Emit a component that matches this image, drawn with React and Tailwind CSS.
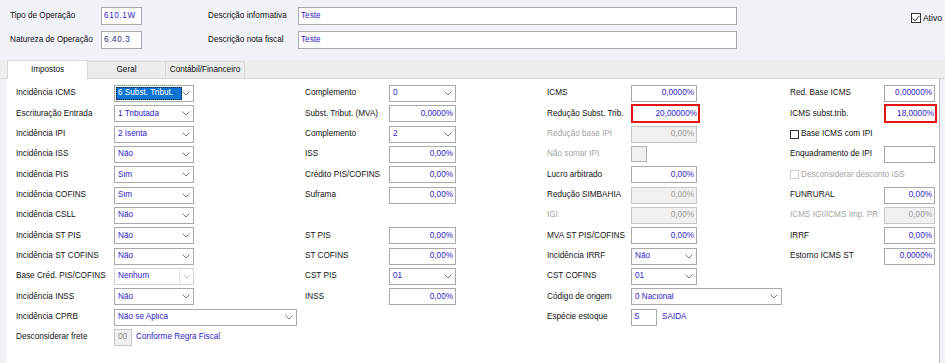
import React from "react";

const BLUE = "text-[#3022c6]";

function Chevron({ light }) {
  return (
    <svg width="8" height="5" viewBox="0 0 8 5" className="shrink-0">
      <path d="M0.5 0.5 L4 4 L7.5 0.5" fill="none" stroke={light ? "#c4c4c4" : "#7a7a7a"} strokeWidth="1" />
    </svg>
  );
}

function Select({ value, w = "w-[80px]", highlight }) {
  return (
    <div className={`${w} h-[17px] bg-white border border-[#a9a9a9] flex items-center pl-[1px] pr-[3px]`}>
      <div className="flex-1 min-w-0 flex items-center">
        {highlight ? (
          <span className="inline-flex items-center w-[66px] h-[13px] bg-[#0a74d4] text-white border border-dotted border-[#1a1a1a] pl-[1px] whitespace-nowrap overflow-hidden">
            {value}
          </span>
        ) : (
          <span className={`${BLUE} pl-[2px] whitespace-nowrap overflow-hidden`}>{value}</span>
        )}
      </div>
      <Chevron />
    </div>
  );
}

function Num({ value, w = "w-[67px]", disabled, red }) {
  if (red) {
    return (
      <div className={`${w} h-[19px] bg-white border-2 border-[#e21414] flex items-center justify-end pr-[1px] ${BLUE}`}>
        {value}
      </div>
    );
  }
  return (
    <div
      className={`${w} h-[17px] border flex items-center justify-end pr-[2px] ${
        disabled ? "bg-[#f0f0f0] border-[#c6c6c6] text-[#9a9a9a]" : `bg-white border-[#a9a9a9] ${BLUE}`
      }`}
    >
      {value}
    </div>
  );
}

function Row({ label, lw, disabled, children }) {
  return (
    <div className="flex items-center h-[20.33px]">
      <div className={`${lw} shrink-0 whitespace-nowrap ${disabled ? "text-[#a3a3a3]" : "text-[#111]"}`}>{label}</div>
      {children}
    </div>
  );
}

function Check({ label, disabled }) {
  return (
    <div className="flex items-center h-[20.33px]">
      <div className={`w-[9px] h-[9px] border ${disabled ? "border-[#cfcfcf]" : "border-[#333]"} bg-white mr-[2px]`} />
      <span className={disabled ? "text-[#a3a3a3]" : "text-[#111]"}>{label}</span>
    </div>
  );
}

export default function App() {
  const c1 = "w-[98px]";
  const c2 = "w-[84px]";
  const c3 = "w-[84px]";
  const c4 = "w-[94px]";
  return (
    <div className="w-[945px] h-[363px] bg-[#f1f2f8] font-['Liberation_Sans',Arial,sans-serif] text-[8.2px] leading-none overflow-hidden">
      {/* top */}
      <div className="h-[60px] flex pl-[10px] pt-[7px]">
        <div className="flex flex-col gap-[6px]">
          <div className="flex items-center h-[18px]">
            <div className="w-[91px] text-[#111]">Tipo de Operação</div>
            <div className={`w-[41px] h-[18px] bg-white border border-[#a9a9a9] flex items-center pl-[2px] tracking-[0.6px] ${BLUE}`}>610.1W</div>
            <div className="w-[66px]" />
            <div className="w-[90px] text-[#111]">Descrição informativa</div>
            <div className={`w-[439px] h-[18px] bg-white border border-[#a9a9a9] flex items-center pl-[2px] ${BLUE}`}>Teste</div>
          </div>
          <div className="flex items-center h-[18px]">
            <div className="w-[91px] text-[#111]">Natureza de Operação</div>
            <div className="w-[41px] h-[18px] bg-white border border-[#a9a9a9] flex items-center pl-[2px] tracking-[0.6px] text-[#1f2a7a]">6.40.3</div>
            <div className="w-[66px]" />
            <div className="w-[90px] text-[#111]">Descrição nota fiscal</div>
            <div className={`w-[439px] h-[18px] bg-white border border-[#a9a9a9] flex items-center pl-[2px] ${BLUE}`}>Teste</div>
          </div>
        </div>
        <div className="ml-auto mr-[3px] mt-[6px] flex items-start">
          <div className="w-[10px] h-[10px] border border-[#333] bg-white flex items-center justify-center">
            <svg width="8" height="7" viewBox="0 0 8 7">
              <path d="M0.8 3.6 L3 5.8 L7.4 0.8" fill="none" stroke="#222" strokeWidth="1" />
            </svg>
          </div>
          <span className="ml-[2px] mt-[1px] text-[#111] text-[8.6px]">Ativo</span>
        </div>
      </div>

      {/* tabs */}
      <div className="h-[19px] bg-[#eeeeee] flex items-end pl-[7px] border-b border-[#d9d9d9]">
        <div className="w-[81px] h-[19px] bg-white border-t border-l border-r border-[#d9d9d9] -mb-[1px] flex items-center justify-center text-[#111]">
          Impostos
        </div>
        <div className="w-[78px] h-[17px] bg-[#ececec] border-t border-r border-[#d9d9d9] flex items-center justify-center text-[#111]">
          Geral
        </div>
        <div className="w-[79px] h-[17px] bg-[#ececec] border-t border-r border-[#d9d9d9] flex items-center justify-center text-[#111]">
          Contábil/Financeiro
        </div>
      </div>

      {/* panel */}
      <div className="ml-[7px] w-[933px] h-[284px] bg-white border-r border-[#bdbdbd] flex pl-[9px] pt-[4.3px]">
        {/* col 1 */}
        <div className="w-[289px] flex flex-col">
          <Row label="Incidência ICMS" lw={c1}><Select value="6 Subst. Tribut." highlight /></Row>
          <Row label="Escrituração Entrada" lw={c1}><Select value="1 Tributada" /></Row>
          <Row label="Incidência IPI" lw={c1}><Select value="2 Isenta" /></Row>
          <Row label="Incidência ISS" lw={c1}><Select value="Não" /></Row>
          <Row label="Incidência PIS" lw={c1}><Select value="Sim" /></Row>
          <Row label="Incidência COFINS" lw={c1}><Select value="Sim" /></Row>
          <Row label="Incidência CSLL" lw={c1}><Select value="Não" /></Row>
          <Row label="Incidência ST PIS" lw={c1}><Select value="Não" /></Row>
          <Row label="Incidência ST COFINS" lw={c1}><Select value="Não" /></Row>
          <Row label="Base Créd. PIS/COFINS" lw={c1}>
            <div className="w-[80px] h-[17px] bg-white border border-[#d2d2d2] flex items-center">
              <span className={`flex-1 pl-[3px] ${BLUE}`}>Nenhum</span>
              <div className="w-px h-full bg-[#e2e2e2]" />
              <div className="w-[13px] flex justify-center"><Chevron light /></div>
            </div>
          </Row>
          <Row label="Incidência INSS" lw={c1}><Select value="Não" /></Row>
          <Row label="Incidência CPRB" lw={c1}><Select value="Não se Aplica" w="w-[183px]" /></Row>
          <Row label="Desconsiderar frete" lw={c1}>
            <div className="w-[18px] h-[17px] bg-[#f0f0f0] border border-[#c6c6c6] flex items-center pl-[3px] text-[#8a8a8a]">00</div>
            <span className={`ml-[4px] ${BLUE}`}>Conforme Regra Fiscal</span>
          </Row>
        </div>

        {/* col 2 */}
        <div className="w-[242px] flex flex-col">
          <Row label="Complemento" lw={c2}><Select value="0" w="w-[67px]" /></Row>
          <Row label="Subst. Tribut. (MVA)" lw={c2}><Num value="0,0000%" /></Row>
          <Row label="Complemento" lw={c2}><Select value="2" w="w-[67px]" /></Row>
          <Row label="ISS" lw={c2}><Num value="0,00%" /></Row>
          <Row label="Crédito PIS/COFINS" lw={c2}><Num value="0,00%" /></Row>
          <Row label="Suframa" lw={c2}><Num value="0,00%" /></Row>
          <div className="h-[20.33px]" />
          <Row label="ST PIS" lw={c2}><Num value="0,00%" /></Row>
          <Row label="ST COFINS" lw={c2}><Num value="0,00%" /></Row>
          <Row label="CST PIS" lw={c2}><Select value="01" w="w-[67px]" /></Row>
          <Row label="INSS" lw={c2}><Num value="0,00%" /></Row>
        </div>

        {/* col 3 */}
        <div className="w-[243px] flex flex-col">
          <Row label="ICMS" lw={c3}><Num value="0,0000%" w="w-[66px]" /></Row>
          <Row label="Redução Subst. Trib." lw={c3}><Num value="20,00000%" w="w-[69px]" red /></Row>
          <Row label="Redução base IPI" lw={c3} disabled><Num value="0,00%" w="w-[66px]" disabled /></Row>
          <Row label="Não somar IPI" lw={c3} disabled>
            <div className="w-[16px] h-[16px] bg-[#f0f0f0] border border-[#b4b4b4]" />
          </Row>
          <Row label="Lucro arbitrado" lw={c3}><Num value="0,00%" w="w-[66px]" /></Row>
          <Row label="Redução SIMBAHIA" lw={c3}><Num value="0,00%" w="w-[66px]" disabled /></Row>
          <Row label="IGI" lw={c3} disabled><Num value="0,00%" w="w-[66px]" disabled /></Row>
          <Row label="MVA ST PIS/COFINS" lw={c3}><Num value="0,00%" w="w-[66px]" /></Row>
          <Row label="Incidência IRRF" lw={c3}><Select value="Não" w="w-[66px]" /></Row>
          <Row label="CST COFINS" lw={c3}><Select value="01" w="w-[66px]" /></Row>
          <Row label="Código de origem" lw={c3}><Select value="0 Nacional" w="w-[151px]" /></Row>
          <Row label="Espécie estoque" lw={c3}>
            <div className={`w-[26px] h-[17px] bg-white border border-[#a9a9a9] flex items-center pl-[2px] ${BLUE}`}>S</div>
            <span className={`ml-[5px] ${BLUE}`}>SAIDA</span>
          </Row>
        </div>

        {/* col 4 */}
        <div className="flex-1 flex flex-col">
          <Row label="Red. Base ICMS" lw={c4}><Num value="0,00000%" w="w-[51px]" /></Row>
          <Row label="ICMS subst.trib." lw={c4}><Num value="18,0000%" w="w-[53px]" red /></Row>
          <Check label="Base ICMS com IPI" />
          <Row label="Enquadramento de IPI" lw={c4}><Num value="" w="w-[51px]" /></Row>
          <Check label="Desconsiderar desconto ISS" disabled />
          <Row label="FUNRURAL" lw={c4}><Num value="0,00%" w="w-[51px]" /></Row>
          <Row label="ICMS IGI/ICMS Imp. PR" lw={c4} disabled><Num value="0,00%" w="w-[51px]" disabled /></Row>
          <Row label="IRRF" lw={c4}><Num value="0,00%" w="w-[51px]" /></Row>
          <Row label="Estorno ICMS ST" lw={c4}><Num value="0,0000%" w="w-[51px]" /></Row>
        </div>
      </div>
    </div>
  );
}
